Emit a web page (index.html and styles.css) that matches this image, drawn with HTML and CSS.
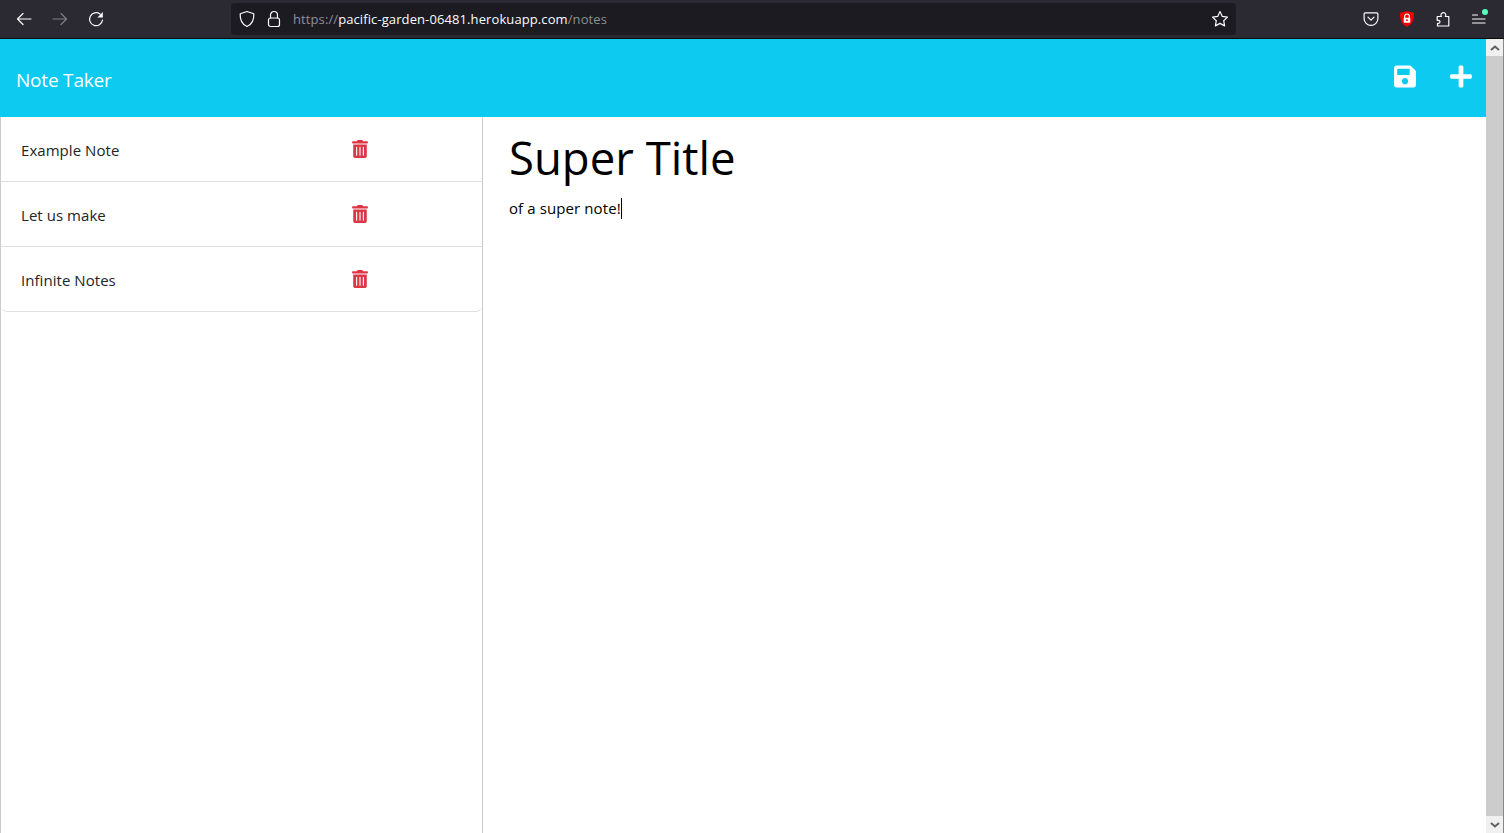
FILE: index.html
```html
<!DOCTYPE html>
<html lang="en">
<head>
<meta charset="utf-8">
<title>Note Taker</title>
<link rel="stylesheet" href="styles.css">
</head>
<body>
<header class="browser">
  <div class="nav-buttons">
    <svg class="tb-icon" viewBox="0 0 16 16"><path d="M15 8H1.500M7 2.500 1.500 8 7 13.500" class="st"/></svg>
    <svg class="tb-icon dim" viewBox="0 0 16 16"><path d="M1 8h13.500M9 2.500 14.500 8 9 13.500" class="st"/></svg>
    <svg class="tb-icon" viewBox="0 0 16 16"><path d="M14.500 9.200A6.500 6.500 0 1 1 12 3" class="st"/><path d="M14.800 1v5.400H9.400z" class="fl"/></svg>
  </div>
  <div class="urlbar">
    <svg class="url-shield" viewBox="0 0 16 18"><path d="M8 1.500 14.800 3.700c.3 6-1.500 10.500-6.800 12.800C2.700 14.200.9 9.700 1.200 3.700z" class="st"/></svg>
    <svg class="url-lock" viewBox="0 0 14 18"><path d="M3.500 8V5a3.500 3.500 0 0 1 7 0v3" class="st"/><rect x="1.500" y="8" width="11" height="8.500" rx="2" class="st"/></svg>
    <span class="url"><span class="url-dim">https://</span>pacific-garden-06481.herokuapp.com<span class="url-dim">/notes</span></span>
    <svg class="url-star" viewBox="0 0 18 18"><path d="m9 1.600 2.300 4.800 5.200.7-3.800 3.600.9 5.200L9 13.400l-4.600 2.500.9-5.200-3.800-3.600 5.200-.7z" class="st"/></svg>
  </div>
  <div class="ext-buttons">
    <svg class="ext-icon" viewBox="0 0 16 16"><path d="M2.300 1.800h11.400c.7 0 1.200.5 1.200 1.200v4.500a6.900 6.900 0 0 1-13.800 0V3c0-.7.5-1.200 1.200-1.200z" class="st"/><path d="m5 6.200 3 3 3-3" class="st"/></svg>
    <svg class="ext-icon shield" viewBox="0 0 16 18"><path d="M8 1 15 2.800c.4 6.500-1.500 11.500-7 14.200C2.500 14.300.6 9.300 1 2.800z" fill="#f00000"/><path d="M5.700 8V6.300a2.300 2.300 0 0 1 4.600 0V8" fill="none" stroke="#fff" stroke-width="1.200"/><rect x="4.700" y="7.800" width="6.600" height="5" rx=".7" fill="#fff"/><circle cx="8" cy="10.200" r=".9" fill="#f00000"/></svg>
    <svg class="ext-icon" viewBox="0 0 16 16"><path d="M2.500 15h11.300V5.500h-3.500c.5-.7.600-1.400.4-2.100-.3-1-1.200-1.700-2.300-1.700-1.400 0-2.500 1.200-2.400 2.500 0 .5.200.9.400 1.300H2.200v3.800h1.300c.9 0 1.500.7 1.500 1.500 0 .9-.7 1.500-1.500 1.500h-1z" class="st"/></svg>
    <div class="menu-icon">
      <svg class="ext-icon" viewBox="0 0 16 16"><path d="M1.500 4h5M1.500 8h12.500M1.500 12h12.500" class="st"/></svg>
      <span class="menu-dot"></span>
    </div>
  </div>
</header>
<div class="viewport">
  <div class="page">
    <nav class="navbar">
      <a class="brand">Note Taker</a>
      <div class="nav-actions">
        <svg class="nav-icon" viewBox="0 0 448 512"><path d="M433.941 129.941l-83.882-83.882A48 48 0 0 0 316.118 32H48C21.490 32 0 53.490 0 80v352c0 26.510 21.490 48 48 48h352c26.510 0 48-21.490 48-48V163.882a48 48 0 0 0-14.059-33.941zM224 416c-35.346 0-64-28.654-64-64 0-35.346 28.654-64 64-64s64 28.654 64 64c0 35.346-28.654 64-64 64zm96-304.520V212c0 6.627-5.373 12-12 12H76c-6.627 0-12-5.373-12-12V108c0-6.627 5.373-12 12-12h228.520c3.183 0 6.235 1.264 8.485 3.515l3.480 3.480A11.996 11.996 0 0 1 320 111.480z"/></svg>
        <svg class="nav-icon" viewBox="0 0 448 512"><path d="M416 208H272V64c0-17.670-14.330-32-32-32h-32c-17.670 0-32 14.330-32 32v144H32c-17.670 0-32 14.330-32 32v32c0 17.670 14.330 32 32 32h144v144c0 17.670 14.330 32 32 32h32c17.670 0 32-14.330 32-32V304h144c17.670 0 32-14.330 32-32v-32c0-17.670-14.330-32-32-32z"/></svg>
      </div>
    </nav>
    <main class="columns">
      <aside class="sidebar">
        <ul class="note-list">
          <li class="note-item"><span class="note-title">Example Note</span><svg class="trash" viewBox="0 0 448 512"><path d="M32 464a48 48 0 0 0 48 48h288a48 48 0 0 0 48-48V128H32zm272-256a16 16 0 0 1 32 0v224a16 16 0 0 1-32 0zm-96 0a16 16 0 0 1 32 0v224a16 16 0 0 1-32 0zm-96 0a16 16 0 0 1 32 0v224a16 16 0 0 1-32 0zM432 32H312l-9.400-18.700A24 24 0 0 0 281.100 0H166.800a23.720 23.720 0 0 0-21.400 13.300L136 32H16A16 16 0 0 0 0 48v32a16 16 0 0 0 16 16h416a16 16 0 0 0 16-16V48a16 16 0 0 0-16-16z"/></svg></li>
          <li class="note-item"><span class="note-title">Let us make</span><svg class="trash" viewBox="0 0 448 512"><path d="M32 464a48 48 0 0 0 48 48h288a48 48 0 0 0 48-48V128H32zm272-256a16 16 0 0 1 32 0v224a16 16 0 0 1-32 0zm-96 0a16 16 0 0 1 32 0v224a16 16 0 0 1-32 0zm-96 0a16 16 0 0 1 32 0v224a16 16 0 0 1-32 0zM432 32H312l-9.400-18.700A24 24 0 0 0 281.100 0H166.800a23.720 23.720 0 0 0-21.400 13.300L136 32H16A16 16 0 0 0 0 48v32a16 16 0 0 0 16 16h416a16 16 0 0 0 16-16V48a16 16 0 0 0-16-16z"/></svg></li>
          <li class="note-item"><span class="note-title">Infinite Notes</span><svg class="trash" viewBox="0 0 448 512"><path d="M32 464a48 48 0 0 0 48 48h288a48 48 0 0 0 48-48V128H32zm272-256a16 16 0 0 1 32 0v224a16 16 0 0 1-32 0zm-96 0a16 16 0 0 1 32 0v224a16 16 0 0 1-32 0zm-96 0a16 16 0 0 1 32 0v224a16 16 0 0 1-32 0zM432 32H312l-9.400-18.700A24 24 0 0 0 281.100 0H166.800a23.720 23.720 0 0 0-21.400 13.300L136 32H16A16 16 0 0 0 0 48v32a16 16 0 0 0 16 16h416a16 16 0 0 0 16-16V48a16 16 0 0 0-16-16z"/></svg></li>
        </ul>
      </aside>
      <section class="editor">
        <h1 class="note-heading">Super Title</h1>
        <p class="note-body"><span>of a super note!</span><span class="caret"></span></p>
      </section>
    </main>
  </div>
  <div class="scrollbar">
    <div class="sb-btn"><svg class="sb-arrow" viewBox="0 0 10 6"><path d="M1 5l4-3.500L9 5"/></svg></div>
    <div class="sb-track"></div>
    <div class="sb-btn"><svg class="sb-arrow" viewBox="0 0 10 6"><path d="M1 1l4 3.500L9 1"/></svg></div>
  </div>
</div>
</body>
</html>
```
FILE: styles.css
```css
* { box-sizing: border-box; }
html, body { margin: 0; height: 100%; overflow: hidden; }
body {
  display: flex;
  flex-direction: column;
  font-family: "Open Sans", "Noto Sans", sans-serif;
  background: #fff;
}
.st { fill: none; stroke: currentColor; stroke-width: 1.2; stroke-linejoin: round; stroke-linecap: round; }
.fl { fill: currentColor; }

/* Browser chrome */
.browser {
  flex: 0 0 39px;
  display: flex;
  align-items: center;
  background: #2b2a33;
  border-bottom: 1px solid #0c0c0d;
  color: #fbfbfe;
  padding-bottom: 1px;
}
.nav-buttons { display: flex; gap: 20px; padding-left: 16px; width: 231px; }
.tb-icon { width: 16px; height: 16px; }
.dim { opacity: .4; }
.urlbar {
  flex: 0 0 1005px;
  height: 32px;
  display: flex;
  align-items: center;
  background: #1c1b22;
  border-radius: 4px;
  padding: 0 7px 0 8px;
}
.url-shield { width: 16px; height: 18px; margin-right: 12px; }
.url-lock { width: 14px; height: 18px; margin-right: 12px; }
.url { flex: 1; font-size: 13px; letter-spacing: .1px; color: #fbfbfe; white-space: nowrap; }
.url-dim { color: #8f8f94; }
.url-star { width: 18px; height: 18px; }
.ext-buttons { flex: 1; display: flex; align-items: center; justify-content: flex-end; gap: 20px; padding-right: 17px; }
.ext-icon { width: 16px; height: 16px; display: block; }
.shield { height: 18px; }
.menu-icon { position: relative; }
.menu-dot { position: absolute; top: -2px; right: -1px; width: 6px; height: 6px; border-radius: 50%; background: #54ffbd; }

/* Page */
.viewport { flex: 1; display: flex; min-height: 0; }
.page { flex: 1; display: flex; flex-direction: column; min-width: 0; }
.navbar {
  flex: 0 0 78px;
  display: flex;
  align-items: center;
  justify-content: space-between;
  background: #0dcaf0;
  padding: 0 14px 0 16px;
}
.brand { font-size: 19px; color: #fff; letter-spacing: -.2px; position: relative; top: 2px; }
.nav-actions { display: flex; gap: 34px; margin-top: -4px; }
.nav-icon { width: 22px; height: 25px; fill: #fff; display: block; }

.columns { flex: 1; display: flex; min-height: 0; }
.sidebar {
  flex: 0 0 483px;
  border-left: 1px solid #ccc;
  border-right: 1px solid #ccc;
}
.note-list { list-style: none; margin: 0; padding: 0; border-bottom: 1px solid #dfdfdf; border-radius: 0 0 6px 6px; }
.note-item {
  height: 65px;
  display: flex;
  align-items: center;
  justify-content: space-between;
  padding: 0 114px 0 20px;
  border-bottom: 1px solid #dfdfdf;
  color: #212529;
  font-size: 15px;
}
.note-item:last-child { height: 64px; border-bottom: 0; }
.note-title { letter-spacing: .05px; padding-top: 2px; }
.trash { width: 16px; height: 18px; fill: #dc3545; display: block; }

.editor { flex: 1; padding: 8px 26px; color: #000; }
.note-heading { margin: 0; font-size: 45.5px; line-height: 64px; font-weight: 400; }
.note-body { margin: 8px 0 0; font-size: 15px; line-height: 22px; letter-spacing: .1px; display: flex; align-items: center; }
.caret { width: 1px; height: 21px; background: #000; }

/* Scrollbar */
.scrollbar { flex: 0 0 18px; display: flex; flex-direction: column; background: #ccc; border-right: 1px solid #888; }
.sb-btn { height: 17px; background: #f0f0f0; display: flex; align-items: center; justify-content: center; }
.sb-track { flex: 1; }
.sb-arrow { width: 10px; height: 6px; fill: none; stroke: #606060; stroke-width: 2; }
```
